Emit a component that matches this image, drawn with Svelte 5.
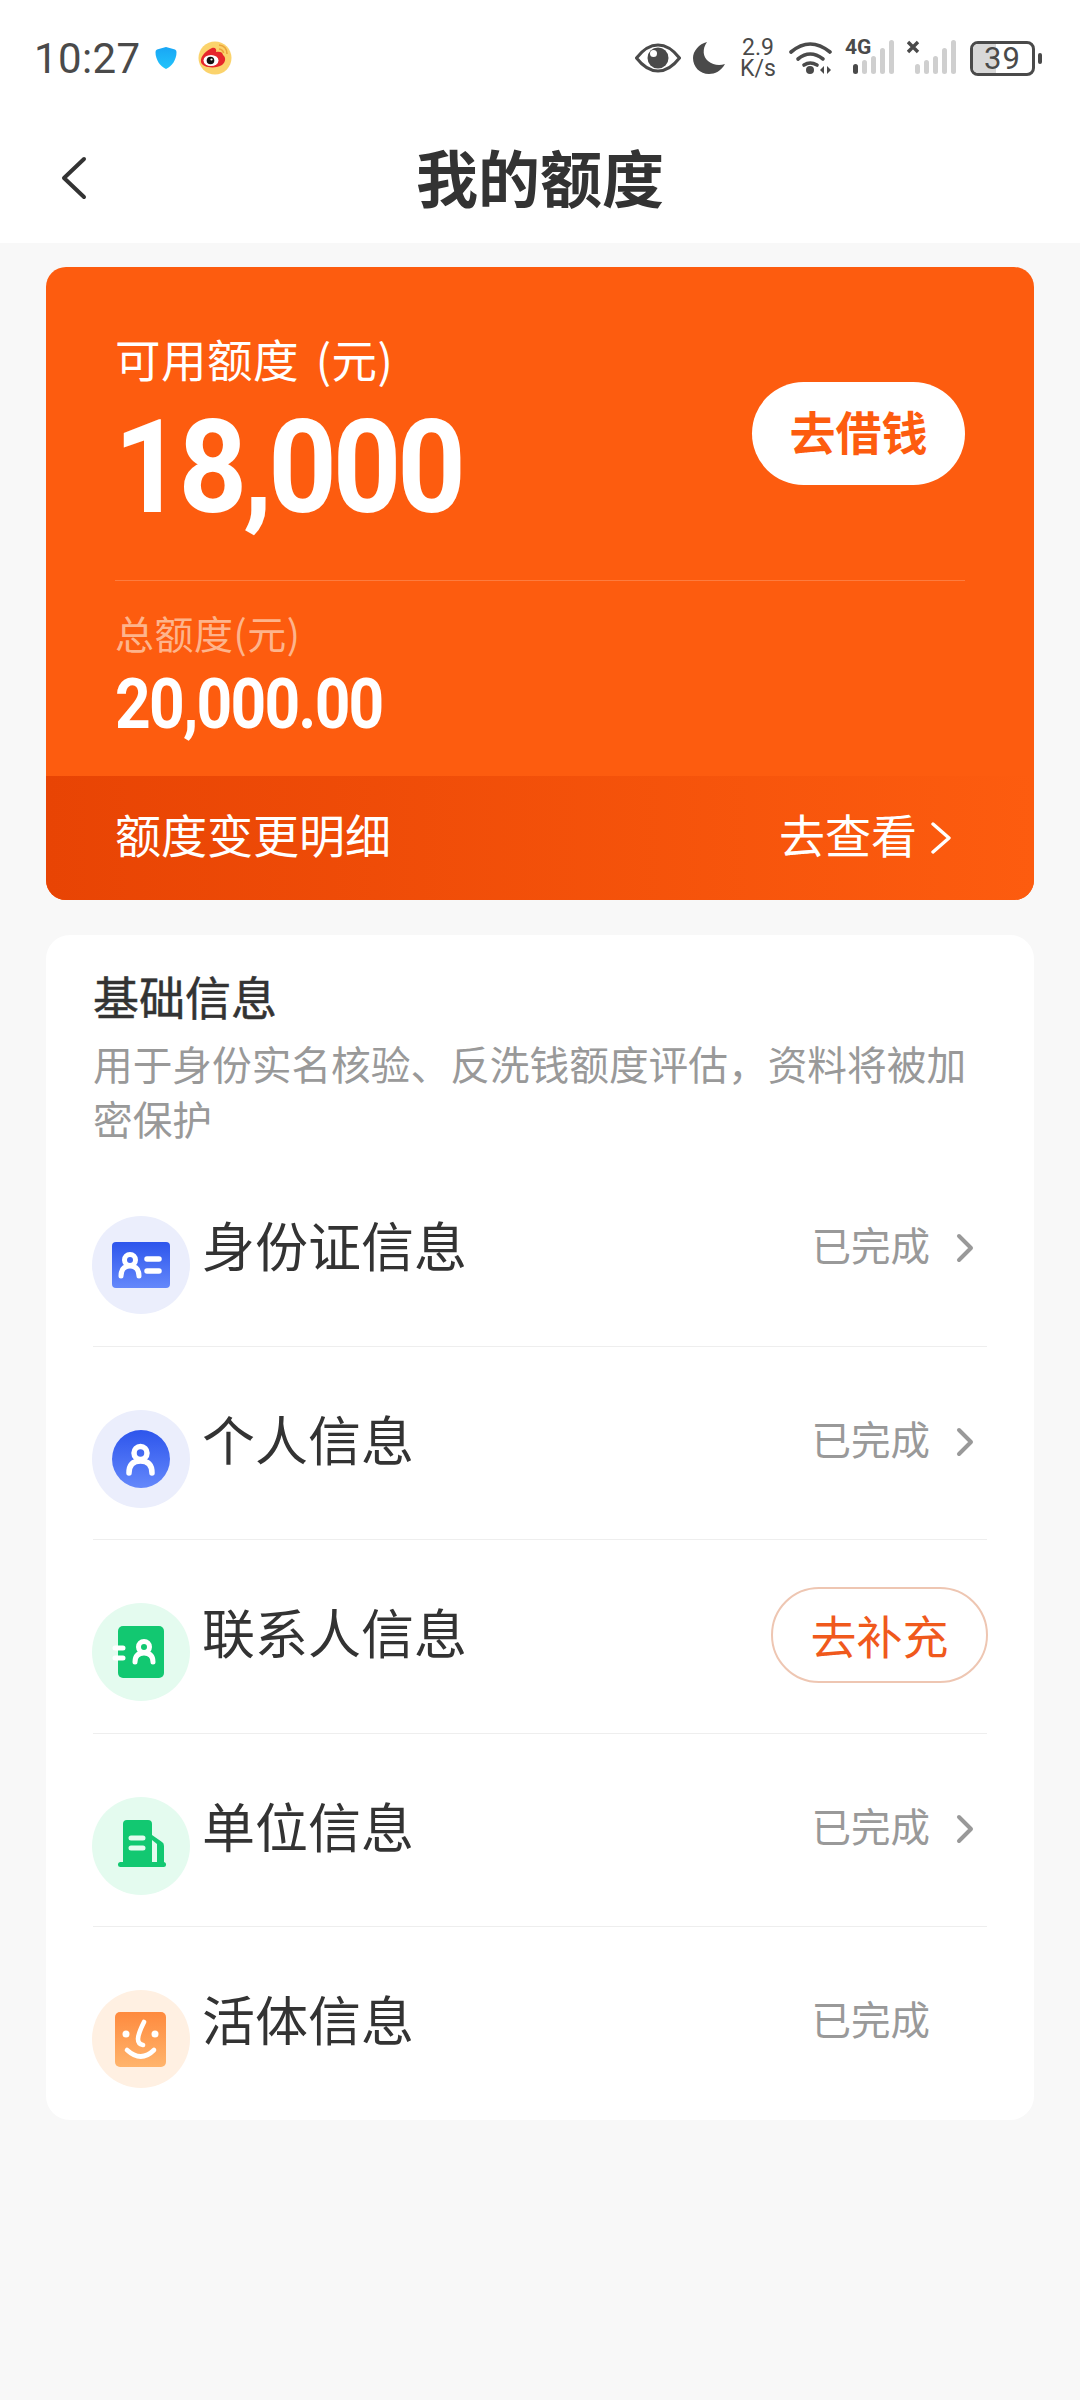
<script>
  const rows = [
    { name: "身份证信息", icon: "id", status: "已完成", arrow: true },
    { name: "个人信息", icon: "person", status: "已完成", arrow: true },
    { name: "联系人信息", icon: "contact", action: "去补充" },
    { name: "单位信息", icon: "company", status: "已完成", arrow: true },
    { name: "活体信息", icon: "face", status: "已完成", arrow: false }
  ];
</script>

<div class="page">
  <div class="head">
    <div class="status">
      <span class="time">10:27</span>
      <svg class="shield" width="22" height="24" viewBox="0 0 22 24">
        <defs>
          <linearGradient id="sh" x1="0" y1="0" x2="0" y2="1">
            <stop offset="0" stop-color="#19a6f5" />
            <stop offset="1" stop-color="#22c4fb" />
          </linearGradient>
        </defs>
        <path d="M11 1 L20 3.5 Q21.500 4 21.500 6 C21.500 14 17 20 11 23 C5 20 .5 14 .5 6 Q.5 4 2 3.500 Z" fill="url(#sh)" />
      </svg>
      <svg class="weibo" width="34" height="34" viewBox="0 0 34 34">
        <circle cx="17" cy="17" r="16.500" fill="#fbd36c" />
        <path d="M3 21 C2 15 9 9 14 7 C17 6 19 8 18 11 C21 10 25 11 25 14 C28 16 28 21 24 24 C18 28 4 27 3 21 Z" fill="#e6262b" />
        <ellipse cx="13" cy="19.500" rx="7.500" ry="5.500" fill="#fff" />
        <circle cx="12.500" cy="19.500" r="3.800" fill="#111" />
        <circle cx="13.500" cy="18.500" r="1.100" fill="#fff" />
        <path d="M21 4 Q29 5 29 13 M21 8 Q25 8.500 25.500 12" fill="none" stroke="#eca43c" stroke-width="1.600" />
      </svg>
      <span class="spacer"></span>
      <svg class="eye" width="46" height="30" viewBox="0 0 46 30">
        <path d="M1.500 15 C10 4 18 2 23 2 C28 2 36 4 44.500 15 C36 26 28 28 23 28 C18 28 10 26 1.500 15 Z" fill="none" stroke="#4a4a4a" stroke-width="3" />
        <circle cx="23" cy="15" r="10.500" fill="#4a4a4a" />
        <circle cx="18.500" cy="10.500" r="3.500" fill="#fff" />
      </svg>
      <svg class="moon" width="32" height="34" viewBox="0 0 32 34">
        <path d="M14 1 C9 8 10 16 15 20 C20 24 26 25 32 23 C28 30 22 33 16 33 C7 33 0 26 0 17 C0 10 6 3 14 1 Z" fill="#4a4a4a" />
      </svg>
      <div class="speed"><span>2.9</span><span>K/s</span></div>
      <svg class="wifi" width="44" height="34" viewBox="0 0 44 34">
        <g fill="none" stroke="#4a4a4a" stroke-width="3.600" stroke-linecap="round">
          <path d="M2 11 Q21 -5 41 11" />
          <path d="M9 18 Q21 8 34 18" />
          <path d="M15 24 Q21 20 28 24" />
        </g>
        <circle cx="21" cy="29" r="4" fill="#4a4a4a" />
        <path d="M31 29 L35 25 V33 Z M38 25 L42 29 L38 33 Z" fill="#4a4a4a" />
      </svg>
      <svg class="sig" width="50" height="44" viewBox="0 -8 50 44">
        <text x="0" y="14" class="lte">4G</text>
        <rect x="8" y="24" width="5" height="10" rx="2.500" fill="#4a4a4a" />
        <rect x="17" y="20" width="5" height="14" rx="2.500" fill="#cfcfcf" />
        <rect x="26" y="16" width="5" height="18" rx="2.500" fill="#cfcfcf" />
        <rect x="35" y="8" width="5" height="26" rx="2.500" fill="#cfcfcf" />
        <rect x="44" y="0" width="5" height="34" rx="2.500" fill="#cfcfcf" />
      </svg>
      <svg class="sig2" width="50" height="36" viewBox="0 0 50 36">
        <path d="M1 2 L11 12 M11 2 L1 12" stroke="#4a4a4a" stroke-width="3.400" />
        <rect x="8" y="24" width="5" height="10" rx="2.500" fill="#cfcfcf" />
        <rect x="17" y="20" width="5" height="14" rx="2.500" fill="#cfcfcf" />
        <rect x="26" y="16" width="5" height="18" rx="2.500" fill="#cfcfcf" />
        <rect x="35" y="8" width="5" height="26" rx="2.500" fill="#cfcfcf" />
        <rect x="44" y="0" width="5" height="34" rx="2.500" fill="#cfcfcf" />
      </svg>
      <div class="battery">
        <div class="level"></div>
        <span>39</span>
      </div>
      <div class="tip"></div>
    </div>
    <div class="nav">
      <svg class="back" width="28" height="44" viewBox="0 0 28 44">
        <path d="M24 3 L4 22 L24 41" fill="none" stroke="#333" stroke-width="4" stroke-linecap="round" stroke-linejoin="round" />
      </svg>
      <h1>我的额度</h1>
    </div>
  </div>

  <div class="content">
    <div class="quota">
      <div class="quota-main">
        <div class="top">
          <div>
            <div class="label">可用额度 (元)</div>
            <div class="amount">18,000</div>
          </div>
          <div class="borrow">去借钱</div>
        </div>
        <div class="line"></div>
        <div class="sub-label">总额度(元)</div>
        <div class="sub-amount">20,000.00</div>
      </div>
      <div class="quota-foot">
        <span>额度变更明细</span>
        <span class="see">去查看
          <svg width="22" height="32" viewBox="0 0 22 32">
            <path d="M3 2 L19 16 L3 30" fill="none" stroke="#fff" stroke-width="3.400" stroke-linecap="round" stroke-linejoin="round" />
          </svg>
        </span>
      </div>
    </div>

    <div class="info">
      <div class="info-title">基础信息</div>
      <div class="info-desc">用于身份实名核验、反洗钱额度评估，资料将被加密保护</div>
      <div class="rows">
        {#each rows as row, i}
          <div class="row" class:last={i === rows.length - 1}>
            <svg class="row-icon" width="98" height="98" viewBox="0 0 98 98">
              <defs>
                <linearGradient id="blue{i}" x1="0" y1="0" x2="0" y2="1">
                  <stop offset="0" stop-color="#2d55ec" />
                  <stop offset="1" stop-color="#6488fb" />
                </linearGradient>
                <linearGradient id="orange{i}" x1="0" y1="0" x2="0" y2="1">
                  <stop offset="0" stop-color="#fe8a3e" />
                  <stop offset="1" stop-color="#ffb46c" />
                </linearGradient>
              </defs>
              {#if row.icon === "id"}
                <circle cx="49" cy="49" r="49" fill="#ebeefc" />
                <rect x="20" y="26" width="58" height="46" rx="4" fill="url(#blue{i})" />
                <g fill="none" stroke="#fff" stroke-width="5" stroke-linecap="round">
                  <circle cx="38" cy="44" r="5.500" />
                  <path d="M29 60 Q29 50 38 50 Q47 50 47 60" />
                  <path d="M55 43 H67 M55 55 H67" stroke-width="5.500" />
                </g>
              {:else if row.icon === "person"}
                <circle cx="49" cy="49" r="49" fill="#ebeefc" />
                <circle cx="49" cy="49" r="29" fill="url(#blue{i})" />
                <g fill="none" stroke="#fff" stroke-width="5.500" stroke-linecap="round">
                  <circle cx="48.500" cy="43" r="6.500" />
                  <path d="M37 63 Q37 51 48.500 51 Q60 51 60 63" />
                </g>
              {:else if row.icon === "contact"}
                <circle cx="49" cy="49" r="49" fill="#e4fbef" />
                <rect x="26" y="23" width="46" height="52" rx="5" fill="#12c871" />
                <g fill="none" stroke="#fff" stroke-width="5" stroke-linecap="round">
                  <path d="M23 45 H31 M23 55 H31" />
                  <circle cx="52" cy="44" r="5.500" />
                  <path d="M43 59 Q43 50 52 50 Q61 50 61 59" />
                </g>
              {:else if row.icon === "company"}
                <circle cx="49" cy="49" r="49" fill="#e4fbef" />
                <path d="M31 27 Q31 23 35 23 H56 Q60 23 60 27 V38 L70 45 Q72 46 72 49 V66 H31 Z" fill="#12c871" />
                <path d="M60 43 L65 47 V66 H60 Z" fill="#e4fbef" />
                <rect x="26" y="65" width="48" height="5" rx="2.500" fill="#12c871" />
                <path d="M39 41 H51 M39 51 H51" stroke="#e4fbef" stroke-width="5" stroke-linecap="round" />
              {:else}
                <circle cx="49" cy="49" r="49" fill="#fff0e2" />
                <rect x="23" y="22" width="51" height="55" rx="5" fill="url(#orange{i})" />
                <circle cx="34" cy="44" r="3.500" fill="#fff" />
                <circle cx="63" cy="44" r="3.500" fill="#fff" />
                <path d="M52 32 Q46 44 46 49 Q46 54 51 55" fill="none" stroke="#fff" stroke-width="4.600" stroke-linecap="round" />
                <path d="M35 60 Q49 73 62 60" fill="none" stroke="#fff" stroke-width="4.600" stroke-linecap="round" />
              {/if}
            </svg>
            <div class="row-name">{row.name}</div>
            {#if row.action}
              <div class="fill">{row.action}</div>
            {:else}
              <div class="row-status">{row.status}</div>
              <div class="row-arrow">
                {#if row.arrow}
                  <svg width="19" height="30" viewBox="0 0 19 30">
                    <path d="M3 3 L15 15 L3 27" fill="none" stroke="#999" stroke-width="4" stroke-linecap="round" stroke-linejoin="round" />
                  </svg>
                {/if}
              </div>
            {/if}
          </div>
        {/each}
      </div>
    </div>
  </div>
</div>

<style>
  :global(body) {
    margin: 0;
    background: #f8f8f8;
  }

  .page {
    height: 2400px;
    background: #f8f8f8;
    font-family: "Noto Sans CJK SC", "Noto Sans", sans-serif;
    color: #333;
    overflow: hidden;
  }

  .head {
    background: #fff;
    height: 243px;
  }

  .status {
    display: flex;
    align-items: center;
    height: 116px;
    padding: 0 38px 0 34px;
    box-sizing: border-box;
  }

  .time {
    font: 42px Roboto, sans-serif;
    color: #4a4a4a;
    width: 105px;
    letter-spacing: 0.4px;
  }

  .shield {
    margin-left: 16px;
  }

  .weibo {
    margin-left: 21px;
  }

  .spacer {
    flex: 1;
  }

  .moon {
    margin-left: 12px;
  }

  .speed {
    margin-left: 14px;
    width: 38px;
    display: flex;
    flex-direction: column;
    align-items: center;
    font: 23px/21px Roboto, sans-serif;
    color: #4a4a4a;
  }

  .wifi {
    margin-left: 12px;
  }

  .sig {
    margin-left: 12px;
    margin-top: -8px;
  }

  .lte {
    font: 700 21px Roboto, sans-serif;
    fill: #4a4a4a;
  }

  .sig2 {
    margin-left: 12px;
  }

  .battery {
    margin-left: 13px;
    position: relative;
    width: 65px;
    height: 35px;
    border: 3px solid #4a4a4a;
    border-radius: 8px;
    box-sizing: border-box;
    display: flex;
    align-items: center;
    justify-content: center;
    overflow: hidden;
  }

  .level {
    position: absolute;
    left: 0;
    top: 0;
    bottom: 0;
    width: 39%;
    background: #d8d8d8;
  }

  .battery span {
    position: relative;
    font: 31px/29px Roboto, sans-serif;
    letter-spacing: 1px;
    color: #4a4a4a;
  }

  .tip {
    width: 4px;
    height: 11px;
    margin-left: 3px;
    border-radius: 2px;
    background: #4a4a4a;
  }

  .nav {
    position: relative;
    height: 127px;
    display: flex;
    align-items: center;
    justify-content: center;
  }

  .back {
    position: absolute;
    left: 60px;
    top: 40px;
  }

  .nav h1 {
    margin: 0 0 8px 0;
    font-size: 62px;
    font-weight: 700;
    line-height: 80px;
    color: #333;
  }

  .content {
    padding: 24px 46px 0;
  }

  .quota {
    border-radius: 20px;
    background: #fd5c0f;
    overflow: hidden;
  }

  .quota-main {
    height: 509px;
    padding: 60px 69px 0 69px;
    box-sizing: border-box;
  }

  .top {
    display: flex;
    justify-content: space-between;
    height: 253px;
    color: #fff;
  }

  .label {
    font-size: 45.500px;
    line-height: 62px;
    letter-spacing: 0.5px;
    word-spacing: 6px;
  }

  .amount {
    margin: 11px 0 0 -1px;
    font: 700 130px/136px Roboto, sans-serif;
    letter-spacing: -4.500px;
    transform: scaleX(0.92);
    transform-origin: left center;
  }

  .borrow {
    margin-top: 55px;
    width: 213px;
    height: 103px;
    border-radius: 52px;
    background: #fff;
    color: #fd5c0f;
    font-size: 46px;
    font-weight: 700;
    line-height: 56px;
    padding-bottom: 8px;
    box-sizing: border-box;
    display: flex;
    align-items: center;
    justify-content: center;
  }

  .line {
    height: 1px;
    background: rgba(255, 255, 255, 0.2);
  }

  .sub-label {
    margin-top: 26px;
    font-size: 39px;
    line-height: 50px;
    letter-spacing: 0.5px;
    color: #fdb48c;
  }

  .sub-amount {
    margin-top: 9px;
    font: 700 70px/76px Roboto, sans-serif;
    letter-spacing: -2px;
    color: #fff;
    transform: scaleX(0.89);
    transform-origin: left center;
  }

  .quota-foot {
    height: 124px;
    padding: 0 69px 10px 69px;
    box-sizing: border-box;
    display: flex;
    align-items: center;
    justify-content: space-between;
    background: linear-gradient(90deg, #e84404, #fd5c0f);
    color: #fff;
    font-size: 46px;
  }

  .see {
    display: flex;
    align-items: center;
    gap: 13px;
    margin-right: 13px;
  }

  .see svg {
    margin-top: 10px;
  }

  .info {
    margin-top: 35px;
    padding: 31px 47px 0;
    height: 1185px;
    box-sizing: border-box;
    background: #fff;
    border-radius: 24px;
  }

  .info-title {
    font-size: 46px;
    line-height: 58px;
    font-weight: 400;
    -webkit-text-stroke: 0.5px #333;
  }

  .info-desc {
    margin-top: 11px;
    font-size: 39.700px;
    line-height: 55px;
    color: #999;
    width: 880px;
  }

  .rows {
    margin-top: 8px;
  }

  .row {
    display: flex;
    align-items: flex-start;
    height: 193.600px;
    padding-top: 56px;
    border-bottom: 1px solid #eee;
    box-sizing: border-box;
  }

  .row.last {
    border-bottom: none;
  }

  .row-icon {
    flex: none;
    margin: 7px 0 0 -1px;
  }

  .row-name {
    flex: 1;
    margin-left: 12px;
    font-size: 53px;
    line-height: 70px;
    color: #333;
  }

  .row-status {
    margin-top: 7px;
    font-size: 39.500px;
    line-height: 56px;
    color: #999;
  }

  .row-arrow {
    width: 57px;
    height: 30px;
    margin-top: 24px;
    padding-left: 26px;
    box-sizing: border-box;
  }

  .fill {
    margin: -9px -1px 0 0;
    width: 217px;
    height: 96px;
    box-sizing: border-box;
    border: 2px solid #eec6b2;
    border-radius: 48px;
    color: #f0591c;
    font-size: 46px;
    line-height: 56px;
    padding-bottom: 3px;
    display: flex;
    align-items: center;
    justify-content: center;
    background: #fff;
  }
</style>
